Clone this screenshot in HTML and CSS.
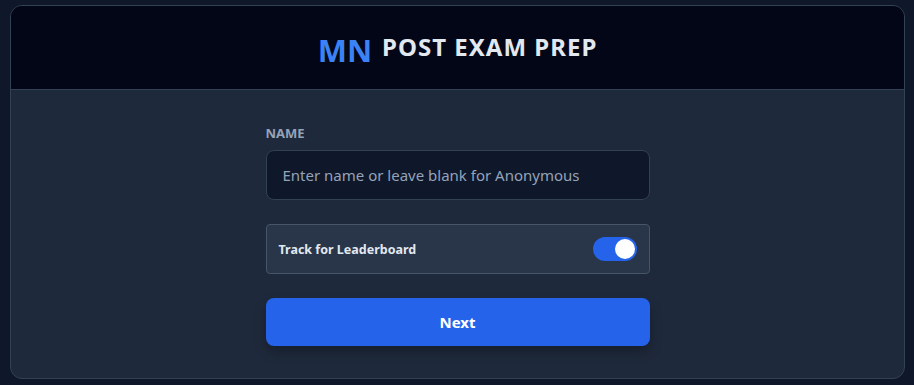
FILE: index.html
```html
<!DOCTYPE html>
<html lang="en">
<head>
    <meta charset="UTF-8">
    <meta name="viewport" content="width=device-width, initial-scale=1.0">
    <title>MN Post Exam Prep</title>
    <link rel="stylesheet" href="styles.css">
</head>
<body>
    <!-- 主卡片 -->
    <div class="card">
        <div class="card-header">
            <h1 class="brand"><span class="brand-mn">MN</span><span class="brand-name">POST EXAM PREP</span></h1>
        </div>
        <div class="card-body">
            <div class="form">
                <div class="form-group">
                    <label for="username">Name</label>
                    <input type="text" id="username" placeholder="Enter name or leave blank for Anonymous">
                </div>
                <div class="toggle-row">
                    <span class="toggle-label">Track for Leaderboard</span>
                    <span class="switch on"><span class="knob"></span></span>
                </div>
                <button class="next-btn" id="nextBtn">Next</button>
            </div>
        </div>
    </div>
</body>
</html>
```

FILE: styles.css
```css
/* 基本樣式 */
body {
    font-family: "Noto Sans", "Open Sans", Arial, sans-serif;
    margin: 0;
    background-color: #0f172a;
    padding: 5px 9px 5px 10px;
}

.card {
    border: 1px solid #334155;
    border-radius: 12px;
    overflow: hidden;
    background-color: #1e293b;
}

.card-header {
    background-color: #020617;
    border-bottom: 1px solid #334155;
    height: 84px;
    box-sizing: border-box;
    padding-top: 6px;
    display: flex;
    justify-content: center;
    align-items: center;
}

.brand {
    margin: 0;
    display: flex;
    align-items: flex-start;
    gap: 10px;
    font-weight: 700;
    line-height: 1;
}

.brand-mn {
    color: #3b82f6;
    font-size: 31px;
}

.brand-name {
    color: #e2e8f0;
    font-size: 24px;
    letter-spacing: 1px;
}

.card-body {
    padding: 34px 0 32px;
    display: flex;
    justify-content: center;
}

.form {
    width: 384px;
    display: flex;
    flex-direction: column;
}

.form-group label {
    display: block;
    color: #94a3b8;
    font-size: 13px;
    font-weight: 700;
    text-transform: uppercase;
    margin-bottom: 8px;
}

.form-group input {
    width: 100%;
    box-sizing: border-box;
    height: 50px;
    padding: 0 16px;
    background-color: #0f172a;
    border: 1px solid #334155;
    border-radius: 8px;
    color: #e2e8f0;
    font-family: inherit;
    font-size: 15px;
    outline: none;
}

.form-group input::placeholder {
    color: #94a3b8;
}

.toggle-row {
    margin-top: 24px;
    height: 50px;
    box-sizing: border-box;
    padding: 0 12px;
    display: flex;
    justify-content: space-between;
    align-items: center;
    background-color: #293548;
    border: 1px solid #475569;
    border-radius: 4px;
}

.toggle-label {
    color: #e2e8f0;
    font-size: 12.5px;
    font-weight: 700;
}

.switch {
    width: 44px;
    height: 24px;
    border-radius: 12px;
    background-color: #2563eb;
    display: flex;
    align-items: center;
    justify-content: flex-end;
    padding: 0 2px;
    box-sizing: border-box;
}

.knob {
    width: 20px;
    height: 20px;
    border-radius: 50%;
    background-color: white;
}

.next-btn {
    margin-top: 24px;
    height: 48px;
    border: none;
    border-radius: 8px;
    background-color: #2563eb;
    color: white;
    font-family: inherit;
    font-size: 15px;
    font-weight: 700;
    box-shadow: 0 6px 12px rgba(0, 0, 0, 0.25);
    cursor: pointer;
}
```
